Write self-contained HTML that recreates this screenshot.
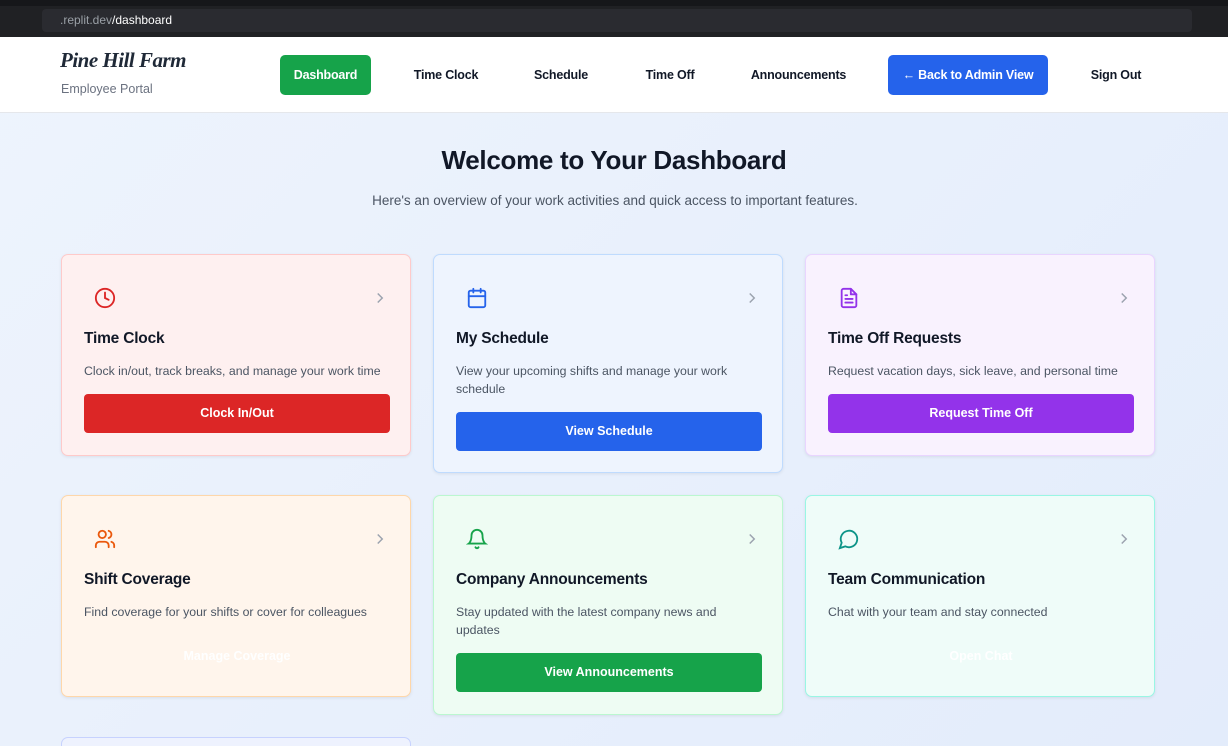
<!DOCTYPE html>
<html><head><meta charset="utf-8"><style>
*{box-sizing:border-box;margin:0;padding:0}
html,body{width:1228px;height:746px;overflow:hidden}
body{font-family:"Liberation Sans",sans-serif;background:linear-gradient(135deg,#eef4fd,#e3ecfb);position:relative}
.chrome{position:absolute;left:0;top:0;width:1228px;height:37px;background:#202124}
.chrome .tabs{position:absolute;top:0;left:0;right:0;height:6px;background:#16171a}
.url{position:absolute;left:42px;top:9px;width:1150px;height:23px;background:#2a2b30;border-radius:4px;color:#9aa0a6;font-size:12px;line-height:23px;padding-left:18px}
.url b{color:#fff;font-weight:normal}
.hdr{position:absolute;top:37px;left:0;width:1228px;height:76px;background:#fff;border-bottom:1px solid #e5e7eb}
.logo{position:absolute;left:60px;top:11px;font-family:"Liberation Serif",serif;font-style:italic;font-weight:bold;font-size:21px;color:#1f2937;letter-spacing:-0.5px}
.sub{position:absolute;left:61px;top:45px;font-size:12.5px;color:#6b7280}
.nav{position:absolute;top:18px;height:40px;line-height:40px;font-size:12.5px;font-weight:bold;color:#111827;text-align:center;border-radius:5px;letter-spacing:-0.2px}
h1{position:absolute;top:145px;width:100%;text-align:center;font-size:26px;color:#111827;letter-spacing:-0.3px}
.lead{position:absolute;top:193px;width:100%;text-align:center;font-size:13.5px;color:#4b5563;padding-left:2px}
.card{position:absolute;width:350px;border:1px solid;border-radius:7px;box-shadow:0 1px 3px rgba(0,0,0,.08)}
.card svg.ic{position:absolute;left:32px;top:32px}
.chev{position:absolute;left:309px;top:34px}
.card h3{position:absolute;left:22px;top:75px;font-size:15.5px;color:#111827;font-weight:bold;letter-spacing:-0.2px}
.card p{position:absolute;left:22px;top:107px;width:300px;font-size:12.3px;line-height:18px;color:#4b5563}
.btn{position:absolute;left:22px;width:306px;height:39px;line-height:39px;border-radius:4px;color:#fff;text-align:center;font-size:12.5px;font-weight:bold}
</style></head><body>
<div class="chrome"><div class="tabs"></div><div class="url">.replit.dev<b>/dashboard</b></div></div>
<div class="hdr">
<div class="logo">Pine Hill Farm</div>
<div class="sub">Employee Portal</div>
<div class="nav" style="left:280px;width:91px;background:#16a34a;color:#fff">Dashboard</div>
<div class="nav" style="left:400px;width:92px">Time Clock</div>
<div class="nav" style="left:520px;width:82px">Schedule</div>
<div class="nav" style="left:630px;width:80px">Time Off</div>
<div class="nav" style="left:740px;width:117px">Announcements</div>
<div class="nav" style="left:888px;width:160px;background:#2563eb;color:#fff">← Back to Admin View</div>
<div class="nav" style="left:1076px;width:80px">Sign Out</div>
</div>
<h1>Welcome to Your Dashboard</h1>
<div class="lead">Here's an overview of your work activities and quick access to important features.</div>

<div class="card" style="left:61px;top:254px;height:202px;background:#fef0f0;border-color:#fecaca">
<svg class="ic" width="22" height="22" viewBox="0 0 24 24" fill="none" stroke="#dc2626" stroke-width="2" stroke-linecap="round"><circle cx="12" cy="12" r="10"/><path d="M12 6v6l4 2"/></svg>
<svg class="chev" width="18" height="18" viewBox="0 0 24 24" fill="none" stroke="#9ca3af" stroke-width="2"><path d="M9 6l6 6-6 6"/></svg>
<h3>Time Clock</h3><p>Clock in/out, track breaks, and manage your work time</p>
<div class="btn" style="top:139px;background:#dc2626">Clock In/Out</div></div>

<div class="card" style="left:433px;top:254px;height:219px;background:#eef4fe;border-color:#bfdbfe">
<svg class="ic" width="22" height="22" viewBox="0 0 24 24" fill="none" stroke="#2563eb" stroke-width="2" stroke-linecap="round"><rect x="3" y="4" width="18" height="18" rx="2"/><path d="M16 2v4M8 2v4M3 10h18"/></svg>
<svg class="chev" width="18" height="18" viewBox="0 0 24 24" fill="none" stroke="#9ca3af" stroke-width="2"><path d="M9 6l6 6-6 6"/></svg>
<h3>My Schedule</h3><p>View your upcoming shifts and manage your work schedule</p>
<div class="btn" style="top:157px;background:#2563eb">View Schedule</div></div>

<div class="card" style="left:805px;top:254px;height:202px;background:#f9f2fe;border-color:#e9d5ff">
<svg class="ic" width="22" height="22" viewBox="0 0 24 24" fill="none" stroke="#9333ea" stroke-width="2" stroke-linecap="round" stroke-linejoin="round"><path d="M14 2H6a2 2 0 0 0-2 2v16a2 2 0 0 0 2 2h12a2 2 0 0 0 2-2V8z"/><path d="M14 2v6h6M16 13H8M16 17H8M10 9H8"/></svg>
<svg class="chev" width="18" height="18" viewBox="0 0 24 24" fill="none" stroke="#9ca3af" stroke-width="2"><path d="M9 6l6 6-6 6"/></svg>
<h3>Time Off Requests</h3><p>Request vacation days, sick leave, and personal time</p>
<div class="btn" style="top:139px;background:#9333ea">Request Time Off</div></div>

<div class="card" style="left:61px;top:495px;height:202px;background:#fff5ec;border-color:#fed7aa">
<svg class="ic" width="22" height="22" viewBox="0 0 24 24" fill="none" stroke="#ea580c" stroke-width="2" stroke-linecap="round"><path d="M16 21v-2a4 4 0 0 0-4-4H6a4 4 0 0 0-4 4v2"/><circle cx="9" cy="7" r="4"/><path d="M22 21v-2a4 4 0 0 0-3-3.870M16 3.13a4 4 0 0 1 0 7.75"/></svg>
<svg class="chev" width="18" height="18" viewBox="0 0 24 24" fill="none" stroke="#9ca3af" stroke-width="2"><path d="M9 6l6 6-6 6"/></svg>
<h3>Shift Coverage</h3><p>Find coverage for your shifts or cover for colleagues</p>
<div class="btn" style="top:141px;color:#fff">Manage Coverage</div></div>

<div class="card" style="left:433px;top:495px;height:220px;background:#eefcf3;border-color:#bbf7d0">
<svg class="ic" width="22" height="22" viewBox="0 0 24 24" fill="none" stroke="#16a34a" stroke-width="2" stroke-linecap="round"><path d="M6 8a6 6 0 0 1 12 0c0 7 3 9 3 9H3s3-2 3-9"/><path d="M10.3 21a1.94 1.94 0 0 0 3.4 0"/></svg>
<svg class="chev" width="18" height="18" viewBox="0 0 24 24" fill="none" stroke="#9ca3af" stroke-width="2"><path d="M9 6l6 6-6 6"/></svg>
<h3>Company Announcements</h3><p>Stay updated with the latest company news and updates</p>
<div class="btn" style="top:157px;background:#16a34a">View Announcements</div></div>

<div class="card" style="left:805px;top:495px;height:202px;background:#effcf9;border-color:#99f6e4">
<svg class="ic" width="22" height="22" viewBox="0 0 24 24" fill="none" stroke="#0d9488" stroke-width="2" stroke-linecap="round"><path d="M7.9 20A9 9 0 1 0 4 16.1L2 22z"/></svg>
<svg class="chev" width="18" height="18" viewBox="0 0 24 24" fill="none" stroke="#9ca3af" stroke-width="2"><path d="M9 6l6 6-6 6"/></svg>
<h3>Team Communication</h3><p>Chat with your team and stay connected</p>
<div class="btn" style="top:141px;color:#fff">Open Chat</div></div>

<div class="card" style="left:61px;top:737px;height:9px;border-bottom:none;border-radius:7px 7px 0 0;box-shadow:none;background:#eef2fe;border-color:#c7d2fe"></div>
</body></html>
